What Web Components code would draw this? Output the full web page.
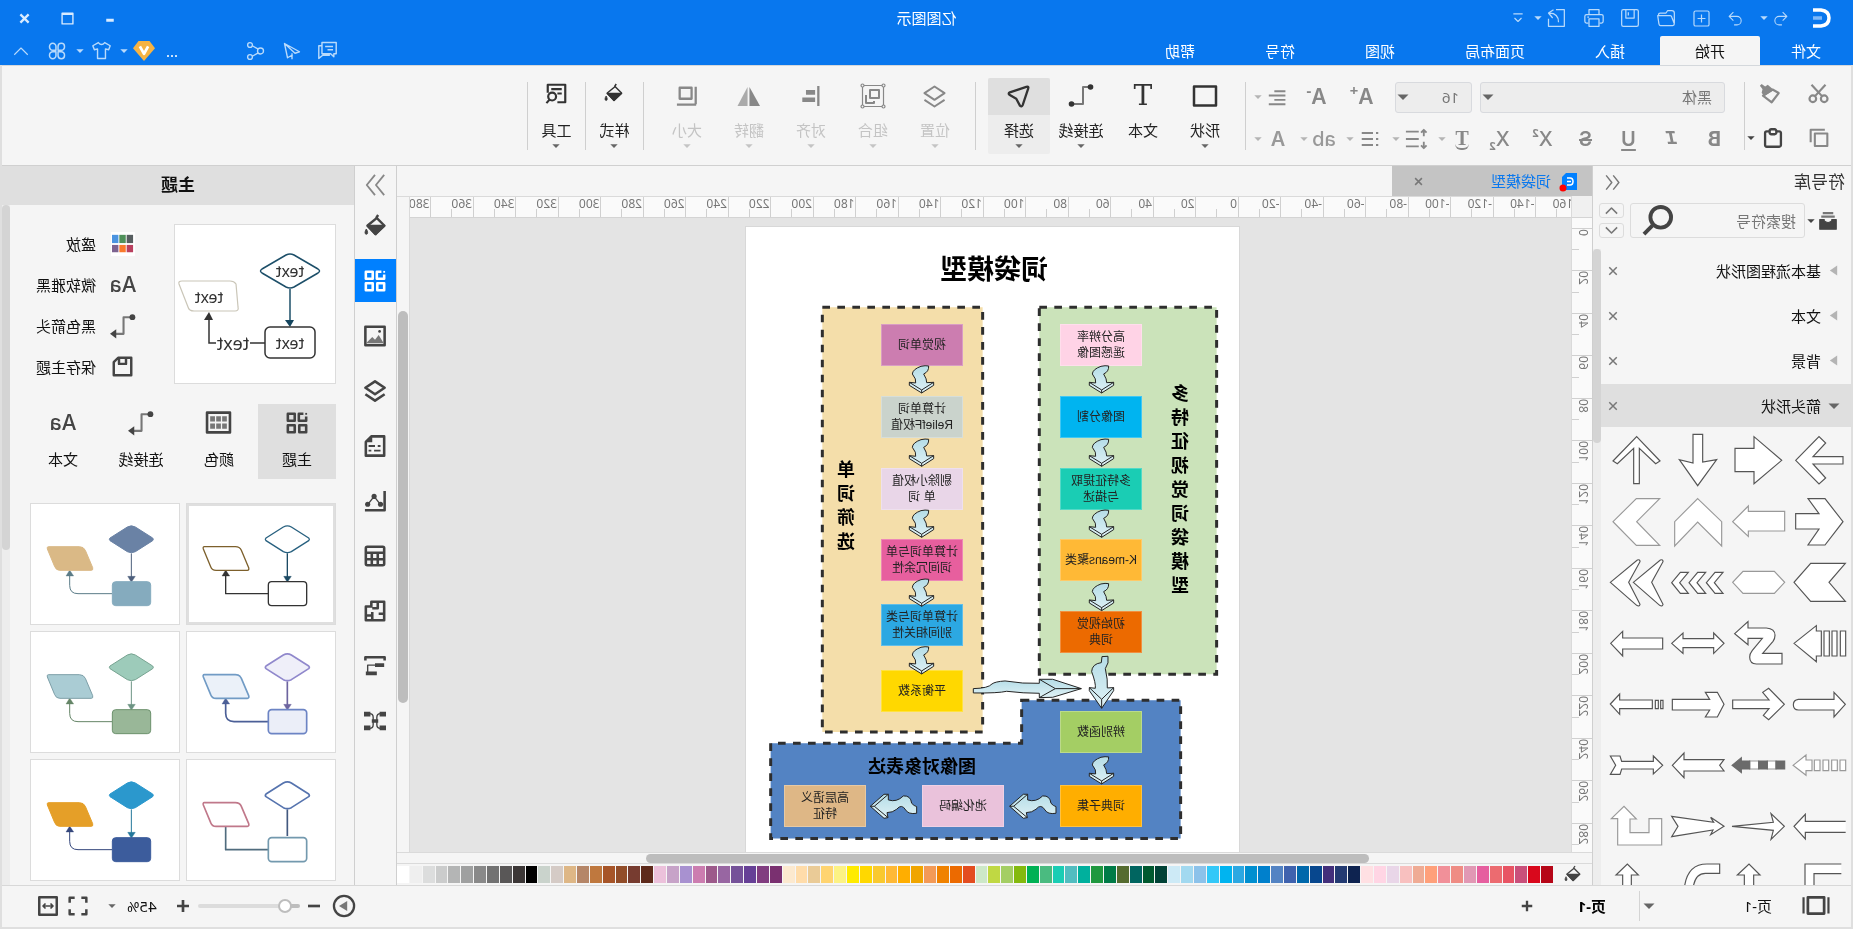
<!DOCTYPE html>
<html lang="zh-CN">
<head>
<meta charset="utf-8">
<title>亿图图示</title>
<style>
html,body{margin:0;height:100%}
body{font:15px/20px "Noto Sans","Noto Sans CJK SC",sans-serif;color:#111;background:#dfdfdf;overflow:hidden}
</style>
</head>
<body>
<edraw-app></edraw-app>
<script>
const BASE = `<style>
*{box-sizing:border-box}
button{font:inherit;color:inherit;background:none;border:0;padding:0;margin:0;display:inline-flex;align-items:center;justify-content:center;white-space:nowrap}
[hidden]{display:none}
</style>`;

/* Registers an element whose shadow root is cloned from a template. */
function element(name, html, setup) {
  const template = document.createElement('template');
  template.innerHTML = BASE + html;
  customElements.define(name, class extends HTMLElement {
    constructor() {
      super();
      this.attachShadow({ mode: 'open' }).append(document.importNode(template.content, true));
    }
    connectedCallback() {
      if (setup && !this.ready) { this.ready = true; setup(this.shadowRoot, this); }
    }
  });
}

const ICONS = {
  undo: '<path d="M9 3L3 9l6 6M3 9h11a6 6 0 0 1 0 12h-4"/>',
  redo: '<path d="M15 3l6 6-6 6M21 9H10a6 6 0 0 0 0 12h4"/>',
  add: '<rect x="2.500" y="2.500" width="19" height="19" rx="2"/><path d="M12 7v10M7 12h10"/>',
  folder: '<path d="M2 18V6q0-3 3-3h5l2 3h7q2 0 2 2v1M2 19l3-8q.5-2 2-2h15l-1.500 10q-.4 2-2 2H4q-2 0-2-2z"/>',
  disk: '<path d="M2 4q0-2 2-2h16q2 0 2 2v16q0 2-2 2H4q-2 0-2-2zM7 2v10h10V2M14 5v4"/>',
  printer: '<path d="M6 8V2h12v6M5 18H3q-2 0-2-2v-6q0-2 2-2h18q2 0 2 2v6q0 2-2 2h-2M6 13h12v9H6zM18 11h2"/>',
  share: '<path d="M12 2H2v20h19v-9M9 17c0-7 4-11 11-11M15 2l6 4-5 6"/>',
  more: '<path d="M4 5h16M6 12l6 6 6-6"/>',
  chat: '<path d="M1 2h18v14H8l-4 4v-4H1zM5 7h10M5 11h7M19 6h4v16l-5-4H9"/>',
  send: '<path d="M22 2L2 13l6 2L22 2l-4 19-7-4M12 15v8"/>',
  nodes: '<circle cx="6" cy="12" r="4"/><circle cx="20" cy="4" r="3.200"/><circle cx="20" cy="20" r="3.200"/><path d="M9 9.500L17 5M9 14.500l8 4.500"/>',
  shirt: '<path d="M8 2L1 6l2 5 4-1v12h10V10l4 1 2-5-7-4q-4 5-8 0z"/>',
  clover: '<path d="M2 6a4.300 4.300 0 1 1 8.600 0v5H6.500A4.500 4.500 0 0 1 2 6zM22 6a4.300 4.300 0 1 0-8.600 0v5h4.100A4.500 4.500 0 0 0 22 6zM2 18a4.300 4.300 0 1 0 8.600 0v-5H6.500A4.500 4.500 0 0 0 2 18zM22 18a4.300 4.300 0 1 1-8.600 0v-5h4.100A4.500 4.500 0 0 1 22 18z"/>',
  up: '<path d="M3 17l9-9 9 9"/>',
  down: '<path d="M3 7l9 9 9-9"/>',
  close: '<path d="M3 3l18 18M21 3L3 21"/>',
  max: '<path d="M2 2h20v20H2zM2 4.500h20"/>',
  min: '<path d="M7 15h10"/>',
  vip: '<path d="M6 1h12l6 8-12 14L0 9z" fill="#f6b343" stroke="none"/><path d="M7.500 7l4.500 8 4.500-8" stroke="#fff" stroke-width="3"/>',
  cut: '<circle cx="5.500" cy="18" r="3.800"/><circle cx="18.500" cy="18" r="3.800"/><path d="M4 2l12 13M20 2L8 15"/>',
  painter: '<path d="M1.500 11.500l7-4 11 7-10 7.500z"/><path d="M7 8l7-6 3 2 4-3 2 2-3 4 1 4-3 4z" fill="currentColor" stroke="none"/>',
  copy: '<rect x="2" y="6.500" width="15" height="15"/><path d="M5 2h17v15"/>',
  paste: '<rect x="2.500" y="4" width="19" height="18.500" rx="2"/><rect x="8" y="1.500" width="8" height="6" rx="2" fill="#f5f5f5"/>',
  align: '<path d="M2 4h14M2 9.500h21M2 15h14M2 20.500h21"/>',
  spacing: '<path d="M9 4h14M9 12h14M9 20h14M3.500 2v7M3.500 15v7M.5 5l3-3 3 3M.5 19l3 3 3-3"/>',
  list: '<path d="M8 4h15M8 12h15M8 20h15M1 4h3M1 12h3M1 20h3"/>',
  square: '<rect x="1" y="2.500" width="22" height="19"/>',
  connector: '<path d="M4 3h6v17h9" stroke="#777"/><circle cx="2.500" cy="3" r="2.800" fill="currentColor" stroke="none"/><circle cx="21.500" cy="20" r="2.800" fill="currentColor" stroke="none"/>',
  arrowline: '<path d="M4 4h7v16h8" stroke="#777"/><circle cx="2.500" cy="4" r="2.800" fill="currentColor" stroke="none"/><path d="M18 15.500v9l6-4.500z" fill="currentColor" stroke="none"/>',
  select: '<path d="M2 4q-1-3 2-2l18 6q2.500 1.500 0 3l-7 4-4 7.500q-2 2-3-.5z"/>',
  layers: '<path d="M12 1.500l10.500 7L12 15.500 1.500 8.500zM1.500 15.500L12 22.500l10.500-7"/>',
  group: '<path d="M1.500 1.500h21v21h-21z" stroke-width="1.200"/><path d="M6 6h9v8H6zM19 11v8h-8v-2"/><g fill="#f5f5f5" stroke-width="1.200"><circle cx="1.500" cy="1.500" r="1.500"/><circle cx="22.500" cy="1.500" r="1.500"/><circle cx="1.500" cy="22.500" r="1.500"/><circle cx="22.500" cy="22.500" r="1.500"/></g>',
  alignobj: '<path d="M4 1v22" stroke-width="2.500"/><path d="M7.500 8h10M7.500 16h14" stroke-width="5"/>',
  flip: '<path d="M11 2v20H0z" fill="#888" stroke="none"/><path d="M13 2v20h10.500z" fill="#aaa" stroke="none"/>',
  size: '<path d="M7 3h13v12H7zM2.500 2v19M2 21.500h21"/>',
  fill: '<path d="M10 3l11 9-9 10-10-10 9-9-2-3"/><path d="M2 12.500h19l-9 9z" fill="currentColor"/><path d="M22.500 16c2 3 2 6 0 6s-2-3 0-6" fill="currentColor" stroke-width="1"/>',
  tools: '<path d="M11 22H2V2h20v9M6 7h12M6 12h5"/><circle cx="17" cy="15.500" r="4.500"/><path d="M20 19l3.500 4"/>',
  collapse: '<path d="M11 2L3 12l8 10M21 2l-8 10 8 10"/>',
  expand: '<path d="M2 1l9 11-9 11M12 1l9 11-9 11"/>',
  library: '<path d="M5 1.500h14M3 6h18" stroke-width="3" stroke="#777"/><path d="M1 10h6v2q5 4 10 0v-2h6v13H1z" fill="currentColor"/>',
  search: '<circle cx="9.500" cy="9.500" r="8"/><path d="M16 16l6.500 6.500"/>',
  theme: '<path d="M5 2h5v7.500H2V5M14.500 2H22v7.500h-7.500zM2 14.500h7.500V22H2zM14.500 14.500H22V22h-7.500z"/><path d="M1 1h2v2H1z" fill="currentColor" stroke="none"/>',
  image: '<rect x="1.500" y="2" width="21" height="20"/><path d="M3 19l5-8 4 5 3-3 6 6v1H3z" fill="#777" stroke="none"/><circle cx="7" cy="7" r="1.500" fill="currentColor" stroke="none"/>',
  page: '<path d="M2 1.500h14l6 6v15H2z"/><path d="M6 12h3M12 12h7M6 17h7M16 17h3" stroke-width="2"/><path d="M15 1l8 7h-8z" fill="currentColor" stroke="none"/>',
  chart: '<path d="M1.500 1v21H23"/><path d="M6 16l7-9 7 9" stroke-width="1.500"/><g fill="currentColor" stroke="none"><circle cx="6" cy="15.500" r="2.800"/><circle cx="13" cy="7" r="2.800"/><circle cx="20" cy="15.500" r="2.800"/></g>',
  table: '<rect x="2" y="2" width="20" height="20" rx="1.500"/><path d="M2 8.500h20M2 15.500h20M9 9v13M15.500 9v13"/>',
  floor: '<path d="M2 2h14v5h6v15H2zM9 2v7h6M2 15h6M15 22v-9M15 17h7"/>',
  gantt: '<path d="M1.500 6V2.500h21V6"/><path d="M11 11h9v9" stroke-width="1.500"/><path d="M2 9h10v4H2zM10 18h12v4H10z" fill="currentColor" stroke="none"/>',
  mind: '<path d="M6 4q4 0 4 4v8q0 4-4 4M18 4q-4 0-4 4v8q0 4 4 4" stroke-width="1.500"/><path d="M0 2h7v5H0zM0 17h7v5H0zM17 2h7v5h-7zM17 17h7v5h-7zM8.500 10h7v4h-7z" fill="currentColor" stroke="none"/>',
  colors: '<rect x="1" y="2.500" width="22" height="19"/><path d="M4 6h4.500v5H4zM9.700 6h4.500v5H9.700zM15.400 6H20v5h-4.600zM4 13h4.500v5H4zM9.700 13h4.500v5H9.700zM15.400 13H20v5h-4.600z" fill="#777" stroke="none"/>',
  swatches: '<path d="M-1-1h26v26H-1z" fill="#fff" stroke="none"/><g stroke="none"><path d="M1 2h7v9H1z" fill="#575e60"/><path d="M9 2h7v9H9z" fill="#4f915a"/><path d="M17 2h7v9h-7z" fill="#4b94e0"/><path d="M1 13h7v8H1z" fill="#b9405f"/><path d="M9 13h7v8H9z" fill="#f9792c"/><path d="M17 13h7v8h-7z" fill="#7d6390"/></g>',
  save: '<path d="M2 2h15l5 5v15H2zM8 2v7h8V2"/>',
  pages: '<rect x="4.500" y="4" width="15" height="15"/><path d="M.5 4v15M23.500 4v15" stroke-width="2"/>',
  plus: '<path d="M12 3v18M3 12h18"/>',
  minus: '<path d="M3 12h18"/>',
  play: '<circle cx="12" cy="12" r="11"/><path d="M8.500 6.500v11l9-5.500z" fill="#777" stroke="none"/>',
  full: '<path d="M2 8V2h6M16 2h6v6M22 16v6h-6M8 22H2v-6"/>',
  fit: '<rect x="1.500" y="1.500" width="21" height="21"/><path d="M6 12h12M9 9l-3 3 3 3M15 9l3 3-3 3" stroke-width="2"/>',
  caret: '<path d="M1 7h22L12 18z" fill="currentColor" stroke="none"/>',
  side: '<path d="M4 1v22l16-11z" fill="currentColor" stroke="none"/>'
};

element('ui-icon', `<style>:host{display:inline-flex;flex:none}svg{display:block;overflow:visible}</style>
<svg viewBox="0 0 24 24" fill="none" stroke="currentColor" stroke-linejoin="round" aria-hidden="true"></svg>`, (root, host) => {
  const svg = root.querySelector('svg'), size = host.getAttribute('size') || 20;
  svg.setAttribute('width', size);
  svg.setAttribute('height', size);
  svg.setAttribute('stroke-width', host.getAttribute('weight') || 2);
  svg.innerHTML = ICONS[host.getAttribute('name')];
});

element('title-bar', `<style>
:host{display:grid;grid-template-rows:36px 29px;background:#0877ee;color:#fff;--soft:#b9dafb}
.top{display:grid;grid-template-columns:1fr auto 1fr;align-items:center}
.quick,.window,.right,nav{display:flex;align-items:center}
.quick{color:var(--soft);padding-left:22px}
.quick button{width:36px}
.quick .wide{width:48px;justify-content:flex-start;padding-left:10px;gap:4px}
.quick .redo{width:31px}
.logo{margin-right:14px}
.window{justify-content:flex-end;color:#d8ebff;padding-right:3px}
.window button{width:43px;height:30px}
.bottom{display:flex;justify-content:space-between}
nav{align-items:stretch}
nav a{color:#fff;text-decoration:none;padding:5px 35px 0}
nav a:first-of-type{padding:5px 31px 0 32px}
nav a[aria-current]{background:#f5f5f5;color:#111;border-radius:2px 2px 0 0;margin-bottom:-1px}
.right{color:var(--soft);gap:4px;padding-right:4px}
.right button{height:24px}
.right .a{width:32px}
.dots{color:#fff;margin-left:58px;width:18px}
.vip{width:24px}.shirt{width:28px}.apps{width:30px}.fold{width:34px}
</style>
<div class="top">
 <div class="quick">
  <svg class="logo" width="18" height="20" viewBox="0 0 18 20" fill="none" stroke="#fff" stroke-width="3.500"><path d="M0 2h8q8 1 8 8t-8 8H0" transform="matrix(-1 0 0 1 18 0)"/><path d="M9 10h9" stroke="#7fb8f8"/></svg>
  <button class="wide" aria-label="撤销"><ui-icon name="undo" size="17" weight="1.500"></ui-icon><ui-icon name="caret" size="8"></ui-icon></button>
  <button class="redo" aria-label="重做"><ui-icon name="redo" size="17" weight="1.500"></ui-icon></button>
  <button aria-label="新建"><ui-icon name="add" size="19" weight="1.500"></ui-icon></button>
  <button aria-label="打开"><ui-icon name="folder" size="20" weight="1.500"></ui-icon></button>
  <button aria-label="保存"><ui-icon name="disk" size="20" weight="1.500"></ui-icon></button>
  <button aria-label="打印"><ui-icon name="printer" size="20" weight="1.500"></ui-icon></button>
  <button class="wide" aria-label="导出"><ui-icon name="share" size="20" weight="1.500"></ui-icon><ui-icon name="caret" size="8"></ui-icon></button>
  <button style="width:20px" aria-label="更多"><ui-icon name="more" size="14" weight="2"></ui-icon></button>
 </div>
 <span>亿图图示</span>
 <div class="window">
  <button aria-label="最小化"><ui-icon name="min" size="18" weight="4"></ui-icon></button>
  <button aria-label="最大化"><ui-icon name="max" size="13" weight="2.500"></ui-icon></button>
  <button aria-label="关闭"><ui-icon name="close" size="11" weight="5"></ui-icon></button>
 </div>
</div>
<div class="bottom">
 <nav><a href="#">文件</a><a href="#" aria-current="page">开始</a><a href="#">插入</a><a href="#">页面布局</a><a href="#">视图</a><a href="#">符号</a><a href="#">帮助</a></nav>
 <div class="right">
  <button class="a" aria-label="消息"><ui-icon name="chat" size="19" weight="1.800"></ui-icon></button>
  <button class="a" aria-label="发送"><ui-icon name="send" size="18" weight="1.800"></ui-icon></button>
  <button class="a" aria-label="分享"><ui-icon name="nodes" size="18" weight="1.800"></ui-icon></button>
  <span class="dots">...</span>
  <button class="vip" aria-label="会员"><ui-icon name="vip" size="22"></ui-icon></button>
  <ui-icon name="caret" size="8"></ui-icon>
  <button class="shirt" aria-label="皮肤"><ui-icon name="shirt" size="19" weight="1.800"></ui-icon></button>
  <ui-icon name="caret" size="8"></ui-icon>
  <button class="apps" aria-label="应用"><ui-icon name="clover" size="18" weight="2"></ui-icon></button>
  <button class="fold" aria-label="收起"><ui-icon name="up" size="18" weight="1.500"></ui-icon></button>
 </div>
</div>`);

element('tool-button', `<style>
:host{display:block;width:62px;height:76px;color:#333}
button{width:100%;height:100%;display:grid;grid-template-columns:100%;grid-template-rows:37px 31px 8px;justify-items:center;border-radius:2px;overflow:hidden}
.pic{display:flex;align-items:center;justify-content:center;width:100%;height:100%;font:400 28px/30px "DejaVu Serif",serif}
.label{align-self:center;color:#222}
:host([active]) button{background:#ededed}
:host([active]) .pic{background:#dfdfdf}
:host([off]){color:#888}
:host([off]) .label,:host([off]) .caret{color:#c4c4c4}
.caret{color:#666;align-self:start;margin-top:-4px}
:host([narrow]){width:57px}
:host([narrow]) .pic{padding-bottom:6px}
</style>
<button><span class="pic"></span><span class="label"><slot></slot></span><ui-icon class="caret" name="caret" size="8"></ui-icon></button>`, (root, host) => {
  const pic = root.querySelector('.pic');
  if (host.hasAttribute('glyph')) pic.textContent = host.getAttribute('glyph');
  else pic.innerHTML = `<ui-icon name="${host.getAttribute('icon')}" size="${host.getAttribute('size') || 24}" weight="${host.getAttribute('weight') || 2}"></ui-icon>`;
  root.querySelector('.caret').hidden = host.hasAttribute('nocaret');
  if (host.hasAttribute('off')) root.querySelector('button').disabled = true;
});

element('tool-ribbon', `<style>
:host{display:flex;align-items:center;background:#f5f5f5;border-top:1px solid #d4d8dc;border-bottom:1px solid #d0d0d0;color:#888}
.sep{width:1px;height:68px;background:#cfcfcf;flex:none}
.clip{display:grid;grid-template-columns:50px 49px;grid-template-rows:45px 45px;padding-left:7px}
.clip button{gap:8px}
.dark{color:#444;justify-content:flex-start;padding-left:11px}
.text{width:498px;padding:5px 0 0 8px;display:grid;grid-template-rows:42px 42px}
.row{display:flex;align-items:center}
.first{padding-left:11px}
.pick{position:relative;height:31px}
.pick ui-icon{position:absolute;right:2px;top:9px;color:#666;pointer-events:none}
select{appearance:none;width:100%;height:31px;border:1px solid #d8dade;border-radius:3px;background:#ededed;font:inherit;color:#777;padding:0 12px}
.font{width:245px;margin-right:8px}
.num{width:77px;margin-right:11px}
.g{width:43px;font:600 20px/24px Inter,sans-serif}
.w{width:45px;font:600 21px/24px Inter,sans-serif}
sup,sub{font:bold 11px/11px "Noto Sans",sans-serif}
.w sup{font-size:15px}
sup{align-self:flex-start}sub{align-self:flex-end}
.x{font-weight:500}
.m{width:46px;display:grid;grid-template-columns:32px 8px;justify-content:start;justify-items:center;font:600 20px/24px Inter,sans-serif}
.m .c{color:#b4b4b4}
.set{display:flex;padding:0 12px 0 9px}
.under{text-decoration:underline;text-decoration-thickness:2px;text-underline-offset:3px}
.fx{font-family:"Liberation Serif",serif;font-weight:700;line-height:20px;border-bottom:2px solid #888;border-radius:0 0 6px 6px}
</style>
<div class="clip">
 <button aria-label="剪切"><ui-icon name="cut" size="21" weight="2.500"></ui-icon></button>
 <button aria-label="格式刷"><ui-icon name="painter" size="21" weight="2.500"></ui-icon></button>
 <button aria-label="复制"><ui-icon name="copy" size="20" weight="2.500"></ui-icon></button>
 <button class="dark" aria-label="粘贴"><ui-icon name="paste" size="20" weight="2.800"></ui-icon><ui-icon name="caret" size="8"></ui-icon></button>
</div>
<div class="sep"></div>
<div class="text">
 <div class="row first">
  <div class="pick font"><select aria-label="字体"><option>黑体</option></select><ui-icon name="caret" size="12"></ui-icon></div>
  <div class="pick num"><select aria-label="字号"><option>16</option></select><ui-icon name="caret" size="12"></ui-icon></div>
  <button class="w" aria-label="增大字号">A<sup>+</sup></button>
  <button class="w" aria-label="减小字号">A<sup>-</sup></button>
  <button class="m" aria-label="对齐"><ui-icon name="align" size="19" weight="2.500"></ui-icon><ui-icon class="c" name="caret" size="8"></ui-icon></button>
 </div>
 <div class="row">
  <button class="g" aria-label="粗体" style="font-weight:700">B</button>
  <button class="g" aria-label="斜体" style="font-family:'Liberation Mono',monospace;font-style:italic;font-weight:700">I</button>
  <button class="g under" aria-label="下划线">U</button>
  <button class="g" aria-label="删除线" style="text-decoration:line-through;text-decoration-thickness:2px">S</button>
  <button class="g x" aria-label="上标">X<sup>2</sup></button>
  <button class="g x" aria-label="下标">X<sub>2</sub></button>
  <button class="m" aria-label="文字效果"><span class="fx">T</span><ui-icon class="c" name="caret" size="8"></ui-icon></button>
  <button class="m" aria-label="行距"><ui-icon name="spacing" size="22"></ui-icon><ui-icon class="c" name="caret" size="8"></ui-icon></button>
  <button class="m" aria-label="项目符号"><ui-icon name="list" size="18" weight="2.800"></ui-icon><ui-icon class="c" name="caret" size="8"></ui-icon></button>
  <button class="m" aria-label="大小写"><span style="font-weight:500;color:#999">ab</span><ui-icon class="c" name="caret" size="8"></ui-icon></button>
  <button class="m" aria-label="字体颜色"><span style="color:#999">A</span><ui-icon class="c" name="caret" size="8"></ui-icon></button>
 </div>
</div>
<div class="sep"></div>
<div class="set">
 <tool-button icon="square" weight="2.500">形状</tool-button><tool-button glyph="T" nocaret>文本</tool-button><tool-button icon="connector">连接线</tool-button><tool-button icon="select" size="22" weight="2.500" active>选择</tool-button>
</div>
<div class="sep"></div>
<div class="set">
 <tool-button off icon="layers" size="23">位置</tool-button><tool-button off icon="group">组合</tool-button><tool-button off icon="alignobj" size="22">对齐</tool-button><tool-button off icon="flip" size="23">翻转</tool-button><tool-button off icon="size" size="22" weight="2.500">大小</tool-button>
</div>
<div class="sep"></div><tool-button narrow icon="fill" size="18">样式</tool-button>
<div class="sep"></div><tool-button narrow icon="tools" size="21" weight="2.500">工具</tool-button>
<div class="sep"></div>`);

/* Arrow outlines of the library, four to a row; COLS and ROWS hold the cell centres. */
const COLS = [780, 597, 412, 230], ROWS = [904, 1086, 130, 314, 497, 680, 862, 1045];
const bar = (x, w, t, b) => `M${x} ${t}h${w}V${b}h${-w}Z`;
const chevron = x => `M${x + 26} 100h24l-26 31 26 32h-24l-26-32Z`;
const dart = x => `M${x} 130L${x + 81} 63Q${x + 89} 60 ${x + 89} 68L${x + 55} 130L${x + 89} 196Q${x + 87} 204 ${x + 79} 199Z`;
const ARROWS = [
  'M708 904L778 833L798 852L760 893H850V915H760L798 957L778 975Z',
  'M526 868H583V833L666 904L583 974V938H526Z',
  'M398 826H427V909L469 902L412 980L357 902L398 912Z',
  'M230 833L300 906L287 914L238 868V974H221V868L172 914L159 906Z',
  'M745 1018H796L850 1087L796 1157H745L778 1109H708V1063H778Z',
  'M519 1087L566 1040V1056H675V1115H566V1131Z',
  'M412 1018L484 1087V1160L412 1088L343 1160V1087Z',
  'M229 1018H299L230 1087L299 1158H229L159 1087Z',
  'M753 73H857L808 130L857 187H753L703 130Z',
  'M550 97H644L675 130L644 163H550L519 130Z',
  chevron(334) + chevron(386) + chevron(438),
  dart(151) + dart(220),
  'M703 314L770 261V277H785V352H770V369Z' + bar(793, 16, 277, 352) + bar(817, 15, 277, 352) + bar(842, 16, 277, 352),
  'M525 285L565 249V268H620Q646 270 646 290Q646 300 640 308L609 344H667V376H590Q570 375 570 355Q570 345 578 335L608 299H565V318Z',
  'M334 314L368 283V300H460V283L491 314L460 344V327H368V344Z',
  'M152 314L188 278V298H308V331H188V352Z',
  'M823 461L857 497L823 535V514H716Q701 513 701 498Q701 484 716 482H823Z',
  'M519 484H628L609 461L627 449L674 497L627 543L611 530L628 510H519Z',
  'M336 482H448L435 461H471L491 497L471 535H435L448 514H336Z',
  'M151 496L179 466V484H277V510H179V527Z' + bar(286, 9, 485, 510) + bar(302, 7, 485, 510),
  'M700 680L739 649V664H757V696H739V710Z' + bar(764, 17, 664, 696) + bar(790, 17, 664, 696) + bar(816, 17, 664, 696) + bar(841, 17, 664, 696),
  bar(570, 27, 667, 691) + bar(623, 26, 667, 691),
  'M336 680L371 643V663H491L478 680L491 697H371V717Z',
  'M151 652H180L185 668H280V652L308 680L280 706V691H185L180 707H151L167 680Z',
  'M858 847H737V826L703 862L737 900V880H858',
  'M517 862L641 850L634 824L674 862L634 901L641 874Z',
  'M334 832L460 850L451 835L491 862L451 887L458 873L334 893L353 862Z',
  'M154 839L192 802L229 840H210V881H267V839H305V918H173V839Z',
  'M845 1004H763V1060H736V975H845',
  'M533 1008L568 975L601 1008H582V1060H554V1008Z',
  'M371 1060Q375 975 440 975H478V1003H435Q400 1003 397 1060',
  'M168 1008L202 975L235 1008H214V1060H188V1008Z'
];
const PALE = [5, 6, 7, 9, 20, 21, 27];

element('symbol-grid', `<style>
:host{display:grid;grid-template-columns:repeat(4,61px);grid-auto-rows:61px;overflow:hidden;min-height:0;padding-left:1px}
svg{display:block}
</style>`, root => {
  root.innerHTML += ARROWS.map((d, i) => {
    const cx = COLS[i % 4], cy = ROWS[i >> 2];
    const dark = i === 21 ? `<path fill="#6b6b6b" stroke="#6b6b6b" d="M517 680L545 657V667H570V691H545V702Z${bar(597, 26, 667, 691)}${bar(649, 26, 667, 691)}"/>` : '';
    return `<svg viewBox="${cx - 91} ${cy - 91} 183 183" width="61" height="61"><g transform="matrix(-1 0 0 1 ${2 * cx} 0)" fill="#fff" stroke="${PALE.includes(i) ? '#999' : '#555'}" stroke-width="3.500"><path d="${d}"/>${dark}</g></svg>`;
  }).join('');
});

element('symbol-library', `<style>
:host{display:grid;grid-template-rows:36px 39px 178px 1fr;grid-template-columns:1fr 8px;background:#f5f5f5;border-right:1px solid #cfcfcf;min-height:0;overflow:hidden}
header{grid-column:1/3;display:flex;justify-content:space-between;align-items:center;padding:0 11px 0 6px;font-size:17px;line-height:32px;color:#333;margin-bottom:4px}
header ui-icon{color:#777}
.find{grid-column:1/3;display:flex;align-items:flex-start;padding:0 8px 0 14px;color:#444;margin-top:1px}
.box{display:flex;align-items:center;width:175px;height:35px;border:1px solid #dcdcdc;border-radius:3px;margin:0 6px 0 2px}
.lib{height:35px;gap:4px}
input{flex:1;min-width:0;border:0;background:none;font:inherit;color:#777;padding:0 8px;outline:0;appearance:none}
input::placeholder{color:#777}
.box ui-icon{margin-right:11px}
.steps{display:grid;gap:5px}
.steps button{width:25px;height:15px;border:1px solid #dcdcdc;border-radius:3px;color:#777}
ul{list-style:none;margin:0;padding:8px 0 0;display:grid;grid-template-rows:repeat(4,43px);gap:2px}
li{display:grid;grid-template-columns:30px 1fr 25px;align-items:center}
li ui-icon{justify-self:center}
li>:first-child{color:#b4b4b4;margin-left:4px}
li[aria-expanded]{background:#dfdfdf}
li[aria-expanded]>:first-child{color:#666}
li button{color:#777}
.track{grid-column:2;grid-row:3/5;background:#ededed;min-height:0;margin-top:8px}
.track div{height:194px;border-radius:4px;background:#d4d4d4}
symbol-grid{grid-row:4;margin-top:11px}
</style>
<header>符号库<ui-icon name="collapse" size="17"></ui-icon></header>
<div class="find">
 <button class="lib" aria-label="符号库"><ui-icon name="library" size="18" weight="1.500"></ui-icon><ui-icon name="caret" size="8"></ui-icon></button>
 <div class="box"><input type="text" aria-label="搜索符号" placeholder="搜索符号"><ui-icon name="search" size="31" weight="3"></ui-icon></div>
 <div class="steps"><button aria-label="上一个"><ui-icon name="up" size="15" weight="2.500"></ui-icon></button><button aria-label="下一个"><ui-icon name="down" size="15" weight="2.500"></ui-icon></button></div>
</div>
<ul>
 <li><ui-icon name="side" size="11"></ui-icon>基本流程图形状<button aria-label="关闭"><ui-icon name="close" size="10" weight="3.500"></ui-icon></button></li>
 <li><ui-icon name="side" size="11"></ui-icon>文本<button aria-label="关闭"><ui-icon name="close" size="10" weight="3.500"></ui-icon></button></li>
 <li><ui-icon name="side" size="11"></ui-icon>背景<button aria-label="关闭"><ui-icon name="close" size="10" weight="3.500"></ui-icon></button></li>
 <li aria-expanded="true"><ui-icon name="caret" size="12"></ui-icon>箭头形状<button aria-label="关闭"><ui-icon name="close" size="10" weight="3.500"></ui-icon></button></li>
</ul>
<symbol-grid></symbol-grid>
<div class="track"><div></div></div>`);

element('ruler-scale', `<style>
:host{display:block;overflow:hidden;background:#fafafa;color:#777;font-size:12px;line-height:14px;min-width:0;min-height:0}
div{display:grid}
:host([axis=x]){border-top:1px solid #dadada;border-bottom:1px solid #d4d4d4}
:host([axis=x]) div{grid-template-columns:repeat(28,1fr);width:1190px;height:20px;margin-left:-8px}
:host([axis=y]) div{grid-template-rows:repeat(16,1fr);height:680px;width:21px;margin-top:-33px}
span{position:relative;display:block}
:host([axis=x]) span{border-left:1px solid #d0d0d0;padding-left:1px}
:host([axis=y]) span{border-top:1px solid #d0d0d0}
span::after{content:"";position:absolute;background:#d0d0d0}
:host([axis=x]) span::after{left:50%;bottom:0;width:1px;height:8px}
:host([axis=y]) span::after{top:50%;right:0;height:1px;width:8px}
:host([axis=y]) b{writing-mode:vertical-rl;transform:rotate(180deg);position:absolute;left:2px;top:0}
b{font-weight:400}
</style><div></div>`, (root, host) => {
  const box = root.querySelector('div'), from = +host.getAttribute('from'), count = +host.getAttribute('count');
  const blank = host.getAttribute('axis') === 'y' ? 0 : -1;
  for (let i = 0; i < count; i++) box.insertAdjacentHTML('beforeend', i === blank ? '<span></span>' : `<span><b>${from + i * 20}</b></span>`);
});

const WAVE = 'M543 529Q556 526 566 528Q567 545 551 552Q561 568 560 578L581 577V586L545 609L508 586V577L527 579Q530 568 517 552Q518 538 543 529Z';
const WAVE_EDGE = 'M508 577L545 600L581 577M545 600V609';
const wave = (x, y) => `<g transform="translate(${x} ${y})"><path d="${WAVE}"/><path d="${WAVE_EDGE}" fill="none"/></g>`;
const sideWave = x => `<g transform="translate(${x} 990)"><path d="M391 859L432 823H445V840Q470 848 490 828Q512 826 515 850Q522 858 530 860V880Q505 884 497 870Q485 850 470 868Q458 878 441 878L444 893L432 895Z"/><path d="M445 823L403 859L444 893M391 859H403" fill="none"/></g>`;

element('flow-node', `<style>
:host{position:absolute;display:flex;align-items:center;justify-content:center;width:82px;height:42px;font-size:12px;line-height:16px;text-align:center;color:#222;white-space:pre;border:1px solid rgba(255,255,255,.25)}
</style><slot></slot>`);

const NODES = [
  [97, 97, '#ffd3e6', '高分辨率\n遥感图像'], [97, 169, '#00b4f0', '图像分割'], [97, 241, '#1acdb4', '多特征提取\n与描述'],
  [97, 312, '#ffb936', 'K-means聚类'], [97, 384, '#ec6a00', '初始视觉\n词典'], [97, 484, '#a4ce64', '辨别函数'], [97, 558, '#ffae00', '词典子集'],
  [235, 558, '#eac2db', '池化编码'], [373, 558, '#deb786', '高层语义\n特征'],
  [276, 97, '#cc7db0', '视觉单词'], [276, 169, '#cad3cc', '计算单词\nReliefF权值'], [276, 241, '#e9d6e8', '剔除小权值\n单 词'],
  [276, 312, '#e75f9e', '计算单词与单\n词间冗余性'], [276, 377, '#2ca8e2', '计算单词与类\n别间相关性'], [276, 443, '#ffd800', '平衡系数']
];

element('flow-page', `<style>
:host{display:block;position:relative;width:493px;height:626px;background:#fff;outline:1px solid #d8d8d8;font-family:"Liberation Sans","Noto Sans CJK SC",sans-serif}
svg{position:absolute;left:0;top:0;overflow:hidden}
h1,h2{position:absolute;margin:0;color:#000;font-weight:700}
h1{left:191px;top:25px;font-size:27px;line-height:36px}
h2{font-size:18px;line-height:24px}
.col{width:18px;word-break:break-all}
</style>
<svg class="areas" width="493" height="626"><g transform="matrix(-.3333 0 0 .3333 499 -37)" stroke="#2e2e2e" stroke-width="9" stroke-dasharray="23 22">
<path d="M898 352H1430V1453H898Z" fill="#cbe3ba"/><path d="M247 352H728V1626H247Z" fill="#f4deaa"/><path d="M845 1531H1322V1946H92V1660H845Z" fill="#5383c3"/></g></svg>
<div class="nodes"></div>
<svg width="493" height="626"><defs><linearGradient id="ice" x2="0" y2="1"><stop stop-color="#b5dde7"/><stop offset="1" stop-color="#dff1f5"/></linearGradient></defs>
<g class="arrows" transform="matrix(-.3333 0 0 .3333 499 -37)" fill="url(#ice)" stroke="#222" stroke-width="3" stroke-linejoin="round"></g></svg>
<h1>词袋模型</h1>
<h2 class="col" style="left:50px;top:155px">多特征视觉词袋模型</h2>
<h2 class="col" style="left:384px;top:231px">单词筛选</h2>
<h2 style="left:263px;top:528px">图像对象表达</h2>`, root => {
  const nodes = root.querySelector('.nodes');
  for (const [x, y, fill, text] of NODES) {
    const node = document.createElement('flow-node');
    node.style.cssText = `left:${x}px;top:${y}px;background:${fill}`;
    node.textContent = text;
    nodes.append(node);
  }
  root.querySelector('.arrows').innerHTML =
    [0, 220, 433, 640, 843].map(y => wave(0, y)).join('') +
    [0, 220, 433, 653, 1173].map(y => wave(540, y)).join('') + sideWave(0) + sideWave(418) +
    `<g transform="translate(0 990)"><path d="M1086 410L1104 409Q1108 430 1096 446Q1104 480 1102 504L1121 503V512L1085 565L1048 512V503L1066 505Q1068 490 1055 455Q1056 432 1084 428Z"/><path d="M1048 503L1085 538L1121 503M1085 538V565" fill="none"/>
    <path d="M700 506Q745 505 756 492Q765 485 795 483Q850 492 898 490V478H938L1024 506L938 532L898 533V520Q850 520 800 514Q775 520 700 519Z"/><path d="M898 478L946 506L898 533M946 506H1024" fill="none"/></g>`;
});

const PALETTE = 'b60617 d9081c c9507b e85464 ec6b70 e65f9f e198b4 ef8c84 f19099 ffa07a efab94 f8c0bf e9d6e8 ffd5e4 ffe0e3 0e2350 233a72 432f7b 07478e 0068ab 3f62ae 5383c3 0080cc 008fd0 2ca8e2 00b4f0 33c8f8 8cc2ea a2d9f0 cdeaf6 004236 00592f 006560 556b2f 007b47 1f983f 00b09d 52bdc0 1acdb4 4abb80 00b154 84b90e a4ce64 c0d843 cde8c8 e34d20 ec6a00 f08200 f39a57 f0a500 ffae00 ffb936 f9c92f ffd800 ffeb00 fcf284 ffd470 eacb97 ffdcaa fce9cf 7a3070 813d80 664096 755299 9866a2 9d5a8b cc7db0 a891d0 c7a3c8 ecc1db 5e2a1b 773c30 924d29 a75528 bf783e b58668 deb786 d5cbc6 cad3cc 000000 3c3736 595757 727272 898989 9fa0a0 b4b5b5 cbcccc dcdddd efefef ffffff'.split(' ');

element('color-strip', `<style>
:host{display:flex;align-items:center;height:20px;padding-left:11px;color:#444;background:#f5f5f5}
.cells{flex:1;display:grid;grid-template-columns:repeat(90,1fr);height:17px;column-gap:1px;margin-left:12px}
</style><ui-icon name="fill" size="16"></ui-icon><div class="cells"></div>`, root => {
  root.querySelector('.cells').innerHTML = PALETTE.map(c => `<i style="background:#${c}"></i>`).join('');
});

element('drawing-area', `<style>
:host{display:grid;grid-template-columns:21px 1fr 13px;grid-template-rows:30px 22px 1fr 12px 21px;background:#f5f5f5;min-width:0;min-height:0;overflow:hidden}
.tabs{grid-column:1/4;display:flex}
.tab{width:200px;background:#c4c4c4;display:flex;align-items:center;padding:0 22px 0 15px;color:#0a78ee}
.doc{width:15px;height:17px;margin-right:11px}
.doc svg{display:block}
.tab button{margin-left:auto;color:#777}
.corner{background:#f0f0f0;border-bottom:1px solid #d4d4d4;border-right:1px solid #dadada}
.v{grid-row:2/4;grid-column:3;padding:114px 0 0 1px;border-left:1px solid #dadada;border-top:1px solid #dadada;min-height:0;overflow:hidden}
.v div{width:10px;height:392px;border-radius:5px;background:#bdbdbd}
ruler-scale[axis=y]{grid-column:1;grid-row:3;border-right:1px solid #dadada}
.canvas{background:#e4e4e4;overflow:hidden;padding:9px 0 0 332px;min-height:0;min-width:0}
.h{grid-column:1/4;grid-row:4;border:1px solid #dadada;border-width:1px 0;padding:1px 12px 0 21px;min-width:0}
.h div{margin-left:17.4%;width:62.2%;height:9px;border-radius:5px;background:#bdbdbd}
color-strip{grid-column:1/4}
</style>
<div class="tabs"><div class="tab"><span class="doc"><svg width="18" height="20" viewBox="0 0 18 20"><path d="M0 0h11l4 4v13H0z" fill="#0080ff"/><path d="M10 5H7q-3 0-3 3.500T7 12h3M6 8.500h4" fill="none" stroke="#fff" stroke-width="1.500"/><circle cx="14" cy="15" r="3.500" fill="#f00"/></svg></span>词袋模型<button aria-label="关闭"><ui-icon name="close" size="9" weight="4"></ui-icon></button></div></div>
<div class="corner"></div>
<ruler-scale axis="x" from="-160" count="28"></ruler-scale>
<div class="v"><div></div></div>
<ruler-scale axis="y" from="-20" count="16"></ruler-scale>
<div class="canvas"><flow-page></flow-page></div>
<div class="h"><div></div></div>
<color-strip></color-strip>`);

element('side-tools', `<style>
:host{display:flex;flex-direction:column;background:#f5f5f5;border:1px solid #cfcfcf;border-width:0 1px;color:#444}
button{height:43px;margin-bottom:12px;flex:none}
button:first-of-type{height:38px;margin:0;color:#888}
.on{background:#0080ff;color:#fff}
</style>`, root => {
  const names = { expand: '展开', fill: '填充', theme: '主题', image: '图片', layers: '图层', page: '页面', chart: '图表', table: '表格', floor: '平面图', gantt: '甘特图', mind: '思维导图' };
  for (const n in names) root.innerHTML += `<button class="${n === 'theme' ? 'on' : ''}" aria-label="${names[n]}"><ui-icon name="${n}" size="${n === 'fill' ? 21 : 22}" weight="${n === 'expand' ? 2 : 2.8}"></ui-icon></button>`;
});

/* Sample flowchart drawn in one theme's colours. */
const THEMES = [
  { d: ['#fff', '#27607f'], p: ['#fff', '#7d602c'], r: ['#fff', '#333'], a: '#1b4a63', b: '#333', w: 4, sq: 1 },
  { d: ['#6a82a5', '#6a82a5'], p: ['#dab986', '#dab986'], r: ['#85abbe', '#85abbe'], a: '#4d5f7c', b: '#5b7c88', w: 3 },
  { d: ['#efeff9', '#9088cc'], p: ['#ebf1f9', '#719bc5'], r: ['#ebeef8', '#6c84c4'], a: '#6d649f', b: '#4b5f97', w: 5 },
  { d: ['#9dcbba', '#77a391'], p: ['#aaccd4', '#7d9fa8'], r: ['#99b798', '#6c916d'], a: '#6d9484', b: '#658567', w: 3 },
  { d: ['#fff', '#5573ae'], p: ['#fff', '#c0788a'], r: ['#fff', '#7399ae'], a: '#42597f', b: '#506c7e', w: 5, sq: 1, plain: 1 },
  { d: ['#2b98cd', '#2b98cd'], p: ['#e59f28', '#e59f28'], r: ['#3c5c9c', '#3c5c9c'], a: '#23779b', b: '#35477c', w: 3 }
];
element('theme-card', `<style>
:host{display:block;height:122px;background:#fff;border:1px solid #dcdcdc;overflow:hidden}
:host([selected]){outline:2px solid #dfdfdf;outline-offset:-3px}
svg{display:block;margin:-1px}
</style>`, (root, host) => {
  const t = THEMES[+host.getAttribute('index')];
  const heads = t.plain ? '' : `<path d="M851 289H874L862 307Z" fill="${t.a}" stroke="${t.a}" stroke-width="1"/><path d="M666 288H689L677 270Z" fill="${t.b}" stroke="${t.b}" stroke-width="1"/>`;
  const bend = t.sq ? 'M804 341H677V272' : 'M804 341H702Q677 341 677 316V275';
  root.innerHTML += `<svg width="150" height="122" viewBox="558 69 450 366"><g transform="matrix(-1 0 0 1 1566 0)" stroke-width="${t.w}" stroke-linejoin="round" fill="none">
<path d="M862 220V300" stroke="${t.a}"/><path d="${bend}" stroke="${t.b}"/>${heads}
<path d="M850 141Q862 134 874 141L926 174Q930 178 926 182L874 215Q862 221 850 215L798 182Q794 178 798 174Z" fill="${t.d[0]}" stroke="${t.d[1]}"/>
<path d="M613 200H706Q719 200 724 211L746 263Q748 271 742 271H648Q636 271 632 260L610 207Q608 200 613 200Z" fill="${t.p[0]}" stroke="${t.p[1]}"/>
<rect x="805" y="305" width="115" height="72" rx="10" fill="${t.r[0]}" stroke="${t.r[1]}"/></g></svg>`;
});

element('theme-panel', `<style>
:host{display:grid;grid-template-rows:39px 1fr;grid-template-columns:1fr 8px;background:#f5f5f5;min-height:0;overflow:hidden}
h2{grid-column:1/3;margin:0;background:#dfdfdf;font-size:17px;line-height:38px;text-align:center}
.body{padding:19px 20px 0 18px;overflow:hidden;min-height:0}
.head{display:grid;grid-template-columns:162px 1fr;grid-template-rows:160px}
.preview{border:1px solid #dcdcdc;background:#fff}
.preview svg{display:block;margin:-1px}
ul{list-style:none;margin:0;padding:0 0 0 35px;display:grid;grid-template-rows:repeat(4,41px);margin-top:-1px}
li{display:grid;grid-template-columns:32px 1fr;column-gap:11px;align-items:center;color:#111}
li>:first-child{justify-self:center;color:#444}
.aa{font:500 21px/24px Inter,sans-serif;color:#444}
.modes{display:grid;grid-template-columns:repeat(4,78px);margin:20px 0 24px}
.modes button{height:75px;display:grid;grid-template-columns:100%;grid-template-rows:37px 35px;align-content:start;justify-items:center;align-items:center}
.modes button[aria-pressed]{background:#dfdfdf}
.modes ui-icon{color:#444}
.cards{display:grid;grid-template-columns:150px 150px;gap:6px}
.track{background:#ededed}
.track div{height:345px;border-radius:4px;background:#d4d4d4}
text{font-family:"Noto Sans",sans-serif;fill:#333}
</style>
<h2>主题</h2>
<div class="body">
 <div class="head">
  <div class="preview"><svg width="162" height="160" viewBox="0 0 162 160" fill="none">
   <path d="M42 31q4-2 8 0l24 14q3 2 0 4l-24 14q-4 2-8 0l-24-14q-3-2 0-4z" stroke="#1d4f69" stroke-width="1.500"/>
   <path d="M46 65v33" stroke="#1d4f69" stroke-width="1.500"/><path d="M42 96h9l-5 7z" fill="#14455e"/>
   <rect x="21" y="103" width="50" height="31" rx="5" stroke="#333" stroke-width="1.500"/>
   <path d="M71 119h15M120 119h7V94" stroke="#333" stroke-width="1.500"/><path d="M123 96h9l-5-8z" fill="#333"/>
   <path d="M100 60q2-3 6-3h48q4 0 3 3l-9 23q-1 4-6 4h-41q-4 0-3-4z" stroke="#cac6b8" stroke-width="1.200"/>
   <text x="46" y="53" font-size="16" text-anchor="middle">text</text><text x="46" y="125" font-size="16" text-anchor="middle">text</text>
   <text x="127" y="79" font-size="16" text-anchor="middle">text</text><text x="103" y="126" font-size="18" text-anchor="middle">text</text>
  </svg></div>
  <ul>
   <li><ui-icon name="swatches" size="22"></ui-icon>盛放</li>
   <li><span class="aa">Aa</span>微软雅黑</li>
   <li><ui-icon name="arrowline" size="25"></ui-icon>黑色箭头</li>
   <li><ui-icon name="save" size="21" weight="2.800"></ui-icon>保存主题</li>
  </ul>
 </div>
 <div class="modes">
  <button aria-pressed="true"><ui-icon name="theme" size="22" weight="2.800"></ui-icon>主题</button>
  <button><ui-icon name="colors" size="25" weight="2.500"></ui-icon>颜色</button>
  <button><ui-icon name="arrowline" size="25"></ui-icon>连接线</button>
  <button><span class="aa">Aa</span>文本</button>
 </div>
 <div class="cards"><theme-card index="0" selected></theme-card><theme-card index="1"></theme-card><theme-card index="2"></theme-card><theme-card index="3"></theme-card><theme-card index="4"></theme-card><theme-card index="5"></theme-card></div>
</div>
<div class="track"><div></div></div>`);

element('status-bar', `<style>
:host{display:flex;align-items:center;justify-content:space-between;background:#f5f5f5;border-top:1px solid #d8d8d8;color:#444}
.left,.right{display:flex;align-items:center;height:100%;padding-bottom:1px}
.left>ui-icon{margin:0 31px 0 22px}
.pick{width:132px;justify-content:space-between;color:#666;padding-right:3px}
.pick span{color:#111}
.left b{margin:0 44px 0 33px;color:#000}
.line{width:1px;height:30px;background:#d4d4d4}
.right{padding-right:36px}
input{appearance:none;width:102px;height:14px;margin:0 7px 0 6px;background:none}
input::-webkit-slider-runnable-track{height:4px;border-radius:2px;background:linear-gradient(90deg,#bdbdbd 15%,#dcdcdc 15%)}
input::-webkit-slider-thumb{appearance:none;width:14px;height:14px;margin-top:-5px;border:2px solid #bdbdbd;border-radius:50%;background:#fff}
.zoom{gap:11px;margin:0 20px 0 18px;color:#666}
.zoom span{color:#111}
</style>
<div class="left"><ui-icon name="pages" size="26" weight="2.500"></ui-icon>
 <button class="pick"><span>页-1</span><ui-icon name="caret" size="12"></ui-icon></button><span class="line"></span>
 <b>页-1</b><button aria-label="新建页面"><ui-icon name="plus" size="14" weight="4"></ui-icon></button></div>
<div class="right">
 <button aria-label="播放" style="margin-right:11px"><ui-icon name="play" size="22" weight="2.500"></ui-icon></button>
 <button aria-label="缩小"><ui-icon name="minus" size="16" weight="4"></ui-icon></button>
 <input type="range" aria-label="缩放" min="0" max="100" value="9">
 <button aria-label="放大"><ui-icon name="plus" size="16" weight="4"></ui-icon></button>
 <button class="zoom"><span>45%</span><ui-icon name="caret" size="8"></ui-icon></button>
 <button aria-label="全屏" style="margin-right:10px"><ui-icon name="full" size="20" weight="3"></ui-icon></button>
 <button aria-label="适应宽度"><ui-icon name="fit" size="20" weight="3"></ui-icon></button>
</div>`);

/* The whole workbench is shown flipped left to right. */
element('edraw-app', `<style>
:host{display:grid;height:100vh;grid-template-rows:65px 101px minmax(0,1fr) 42px 2px;transform:scaleX(-1)}
tool-ribbon,main,status-bar{margin:0 2px}
main{display:grid;grid-template-columns:259px minmax(0,1fr) 43px 352px;min-height:0}
</style>
<title-bar></title-bar>
<tool-ribbon></tool-ribbon>
<main><symbol-library></symbol-library><drawing-area></drawing-area><side-tools></side-tools><theme-panel></theme-panel></main>
<status-bar></status-bar>`);
</script>
</body>
</html>
